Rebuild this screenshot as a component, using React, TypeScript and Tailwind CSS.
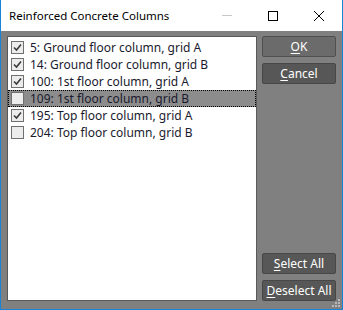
import React, { useState } from "react";

const items = [
  { id: 5, label: "5: Ground floor column, grid A", checked: true },
  { id: 14, label: "14: Ground floor column, grid B", checked: true },
  { id: 100, label: "100: 1st floor column, grid A", checked: true },
  { id: 109, label: "109: 1st floor column, grid B", checked: false },
  { id: 195, label: "195: Top floor column, grid A", checked: true },
  { id: 204, label: "204: Top floor column, grid B", checked: false },
];

function Check({ on }: { on: boolean }) {
  return (
    <span className="w-[13px] h-[13px] border border-[#707070] bg-[#ececec] flex items-center justify-center shrink-0">
      {on && (
        <svg width="9" height="9" viewBox="0 0 9 9">
          <path d="M1 4.5 L3.5 7 L8 1.5" fill="none" stroke="#3a3a3a" strokeWidth="1.6" />
        </svg>
      )}
    </span>
  );
}

function Btn({ hot, rest, primary }: { hot: string; rest: string; primary?: boolean }) {
  return (
    <button
      className={`h-[21px] w-full text-white text-[12px] leading-none border rounded-[2px] ${
        primary ? "bg-[#6b6b6b] border-[#505050]" : "bg-[#575757] border-[#474747]"
      }`}
    >
      <span className="underline underline-offset-2">{hot}</span>
      {rest}
    </button>
  );
}

export default function App() {
  const [rows, setRows] = useState(items);
  const selected = 109;

  return (
    <div
      className="relative w-[343px] h-[310px] border border-t-0 border-[#1883d7] flex flex-col bg-[#808080]"
      style={{ fontFamily: '"Noto Sans", "Open Sans", sans-serif' }}
    >
      <div className="h-[31px] bg-white flex items-center shrink-0">
        <span className="pl-[8px] text-[11.5px] text-black flex-1">Reinforced Concrete Columns</span>
        <div className="flex items-center h-full">
          <div className="w-[46px] flex justify-center">
            <span className="w-[10px] h-px bg-[#c8c8c8]" />
          </div>
          <div className="w-[46px] flex justify-center">
            <span className="w-[10px] h-[10px] border border-black" />
          </div>
          <div className="w-[46px] flex justify-center">
            <svg width="10" height="10" viewBox="0 0 10 10">
              <path d="M0 0 L10 10 M10 0 L0 10" stroke="#000" strokeWidth="1" />
            </svg>
          </div>
        </div>
      </div>
      <div className="flex-1 flex px-[6px] pt-[5px] pb-[8px] gap-[5px]">
        <div className="flex-1 bg-white border border-[#5a5a5a] pt-[2px]">
          {rows.map((r) => (
            <div
              key={r.id}
              onClick={() => setRows(rows.map((x) => (x.id === r.id ? { ...x, checked: !x.checked } : x)))}
              className={`h-[17px] flex items-center gap-[6px] pl-[3px] text-[12px] text-[#1a1a2e] ${
                r.id === selected ? "bg-[#8c8c8c] outline-1 outline-dotted outline-black -outline-offset-1" : ""
              }`}
            >
              <Check on={r.checked} />
              <span>{r.label}</span>
            </div>
          ))}
        </div>
        <div className="w-[74px] flex flex-col gap-[6px]">
          <Btn hot="O" rest="K" primary />
          <Btn hot="C" rest="ancel" />
          <div className="flex-1" />
          <Btn hot="S" rest="elect All" />
          <Btn hot="D" rest="eselect All" />
        </div>
      </div>
      <svg className="absolute right-[2px] bottom-[2px]" width="8" height="8" viewBox="0 0 8 8">
        <rect x="6" y="0" width="2" height="2" fill="#b8b8b8" />
        <rect x="3" y="3" width="2" height="2" fill="#b8b8b8" />
        <rect x="6" y="3" width="2" height="2" fill="#b8b8b8" />
        <rect x="0" y="6" width="2" height="2" fill="#b8b8b8" />
        <rect x="3" y="6" width="2" height="2" fill="#b8b8b8" />
        <rect x="6" y="6" width="2" height="2" fill="#b8b8b8" />
      </svg>
    </div>
  );
}
